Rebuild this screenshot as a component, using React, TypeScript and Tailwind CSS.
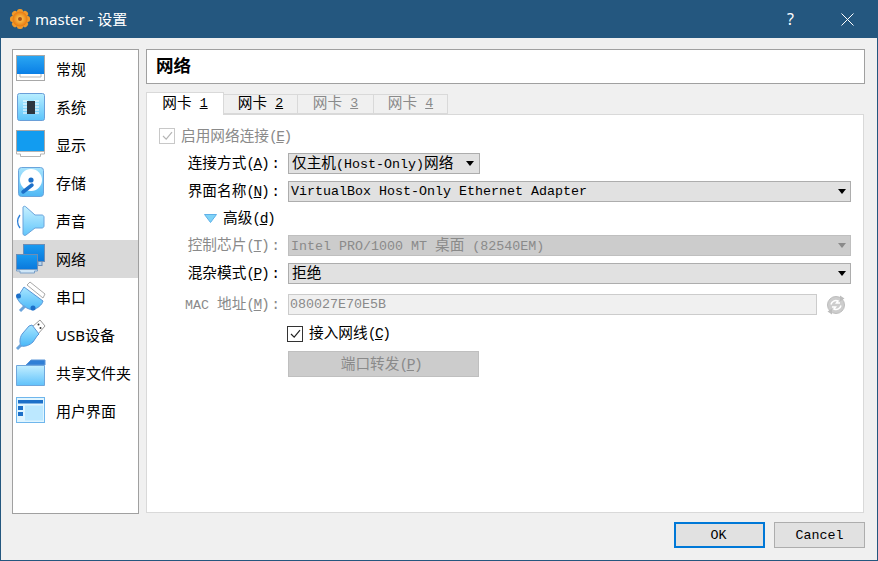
import React from "react";

const F = { fontFamily: '"Liberation Mono","Noto Sans CJK SC",monospace' };
const S = { fontFamily: '"Noto Sans","Noto Sans CJK SC",sans-serif' };
const grad = (id: string, a: string, b: string) => (
  <linearGradient id={id} x1="0" y1="0" x2="0" y2="1">
    <stop offset="0" stopColor={a} />
    <stop offset="1" stopColor={b} />
  </linearGradient>
);

const Monitor = () => (
  <svg width="32" height="32" viewBox="0 0 32 32">
    <defs>{grad("m", "#2aa6f2", "#0a7fe6")}</defs>
    <rect x="2.5" y="2.5" width="28" height="25" fill="#fff" stroke="#a8a8a8" />
    <rect x="3" y="3" width="27" height="18" fill="url(#m)" />
    <path d="M6 21v3h21v-3" fill="none" stroke="#b5b5b5" />
  </svg>
);
const Display = () => (
  <svg width="32" height="32" viewBox="0 0 32 32">
    <rect x="2.5" y="1.5" width="28" height="21" fill="#129cf0" stroke="#a8a8a8" />
    <path d="M2.5 22.5h28v2.5h-4v2.5h-20V25h-4z" fill="#fff" stroke="#b5b5b5" />
  </svg>
);
const Chip = () => (
  <svg width="32" height="32" viewBox="0 0 32 32">
    <defs>{grad("c", "#b8eeff", "#5cc4fb")}</defs>
    <rect x="3.5" y="2.5" width="27" height="27" rx="2" fill="url(#c)" stroke="#6a9fd8" />
    <path d="M9 10h5M9 13h5M9 16h5M9 19h5M9 22h5M20 10h5M20 13h5M20 16h5M20 19h5M20 22h5" stroke="#fff" />
    <rect x="13" y="10" width="8" height="13" fill="#2d3640" />
  </svg>
);
const Disk = () => (
  <svg width="32" height="32" viewBox="0 0 32 32">
    <defs>{grad("d", "#a8e4fd", "#4fb8f5")}</defs>
    <rect x="4.5" y="0.5" width="25" height="29" rx="3" fill="url(#d)" stroke="#6aa4dc" />
    <circle cx="17" cy="13" r="11" fill="#fff" />
    <circle cx="17" cy="13" r="2.6" fill="#1d70c9" />
    <path d="M9 25l9-7" stroke="#1d70c9" strokeWidth="3.5" strokeLinecap="round" />
  </svg>
);
const Speaker = () => (
  <svg width="32" height="32" viewBox="0 0 32 32">
    <defs>{grad("s", "#c8f1ff", "#62c6fb")}</defs>
    <path d="M9 2c1-1 2-1 3 0l9 8h7c1 0 2 1 2 2v9c0 1-1 2-2 2h-7l-9 7c-1 1-3 0-3-1z" fill="url(#s)" stroke="#6aa4dc" />
    <path d="M6 10c-3 4-3 9 0 13" fill="none" stroke="#2c7fd8" strokeWidth="1.4" />
  </svg>
);
const Net = () => (
  <svg width="32" height="32" viewBox="0 0 32 32">
    <defs>{grad("n", "#1a9bf0", "#0a78dc")}</defs>
    <rect x="9.5" y="1.5" width="21" height="17" fill="url(#n)" stroke="#6d8db5" />
    <rect x="24" y="18.5" width="4" height="4" fill="#b5d4ee" stroke="#6d8db5" />
    <rect x="2.5" y="11.5" width="21" height="15" fill="url(#n)" stroke="#6d8db5" />
    <path d="M2.5 26.5h21v1.5h-3v2H6v-2H2.5z" fill="#cfe6f7" stroke="#7aa0c8" />
  </svg>
);
const Serial = () => (
  <svg width="32" height="32" viewBox="0 0 32 32">
    <defs>{grad("p", "#a8e6ff", "#4ab8f8")}</defs>
    <path d="M16 1l15 12-2 4L13 4z" fill="#fff" stroke="#a9a9a9" />
    <path d="M10 6l19 14c-1 4-5 7-10 9-7-1-13-6-16-12z" fill="url(#p)" stroke="#5a96d8" />
    <path d="M11 25l-5 5" stroke="#6aa4dc" strokeWidth="3" />
    <circle cx="4.5" cy="15" r="2.5" fill="#1d70c9" />
    <circle cx="19" cy="27" r="2.5" fill="#1d70c9" />
  </svg>
);
const Usb = () => (
  <svg width="32" height="32" viewBox="0 0 32 32">
    <defs>{grad("u", "#a8e6ff", "#4ab8f8")}</defs>
    <path d="M18 8l8-7 5 6-7 8z" fill="#fff" stroke="#9a9a9a" />
    <circle cx="24.5" cy="5.5" r="1" fill="#333" />
    <circle cx="26.5" cy="9" r="1" fill="#333" />
    <path d="M15 7l3-1 7 9-2 2-4 6c-3 3-8 5-12 4-2-4-1-10 2-13z" fill="url(#u)" stroke="#5a96d8" />
    <path d="M7 26l-4 4" stroke="#6aa4dc" strokeWidth="3" />
  </svg>
);
const Folder = () => (
  <svg width="32" height="32" viewBox="0 0 32 32">
    <defs>{grad("f", "#c2eeff", "#60c2fb")}</defs>
    <path d="M12 8l5-5h14v5z" fill="#2f7fd6" stroke="#5a96d8" />
    <path d="M2.5 8.5h28v20h-28z" fill="url(#f)" stroke="#6fa7dc" />
  </svg>
);
const Ui = () => (
  <svg width="32" height="32" viewBox="0 0 32 32">
    <rect x="2.5" y="2.5" width="28" height="25" fill="#e0f5ff" stroke="#6fb6ec" />
    <rect x="4" y="5" width="25" height="3.5" fill="#1d70c9" />
    <rect x="4" y="11" width="5" height="4" fill="#1d70c9" />
    <rect x="4" y="17" width="5" height="4" fill="#1d70c9" />
    <rect x="11" y="10.5" width="18" height="15" fill="#bce8ff" />
  </svg>
);

const Gear = () => (
  <svg width="20" height="20" viewBox="0 0 20 20">
    <defs>
      <radialGradient id="g">
        <stop offset="0" stopColor="#ffd35a" />
        <stop offset="1" stopColor="#e8780f" />
      </radialGradient>
    </defs>
    {[0, 45, 90, 135].map((a) => (
      <rect key={a} x="7" y="0" width="6" height="20" rx="2.5" fill="#ef9a2c" transform={`rotate(${a} 10 10)`} />
    ))}
    <circle cx="10" cy="10" r="7.5" fill="url(#g)" />
    <circle cx="10" cy="10" r="2" fill="#a8501a" />
  </svg>
);

const items: [string, React.ReactNode][] = [
  ["常规", <Monitor />],
  ["系统", <Chip />],
  ["显示", <Display />],
  ["存储", <Disk />],
  ["声音", <Speaker />],
  ["网络", <Net />],
  ["串口", <Serial />],
  ["USB设备", <Usb />],
  ["共享文件夹", <Folder />],
  ["用户界面", <Ui />],
];

const Arrow = ({ c = "#000" }: { c?: string }) => (
  <svg width="8" height="5" viewBox="0 0 8 5" className="shrink-0"><path d="M0 0h8L4 5z" fill={c} /></svg>
);

const M = ({ c }: { c: string }) => (
  <span className="tracking-[-1.5px]">(<u>{c}</u>)</span>
);

const Label = ({ text, m, dim }: { text: React.ReactNode; m: string; dim?: boolean }) => (
  <div className={`w-[141px] shrink-0 pr-[8px] text-right text-[14.67px] whitespace-nowrap ${dim ? "text-[#8a8a8a]" : "text-black"}`}>
    {text}<M c={m} /><span className="ml-[3px]">:</span>
  </div>
);

const Tab = ({ n, w, active, dim }: { n: string; w: string; active?: boolean; dim?: boolean }) => (
  <div
    className={`${w} flex items-center justify-center text-[14.67px] border border-[#d9d9d9] ${
      active ? "h-[23px] bg-white border-b-0 relative z-10 -mb-px" : "h-[20px] bg-[#f0f0f0] -ml-px"
    } ${dim ? "text-[#8a8a8a]" : "text-black"}`}
  >
    网卡<span className="text-[13.33px]">&nbsp;<u>{n}</u></span>
  </div>
);

export default function App() {
  return (
    <div className="w-[878px] h-[561px] flex flex-col bg-[#f0f0f0] border border-t-0 border-[#24577f] overflow-hidden" style={F}>
      <div className="h-[38px] shrink-0 -mx-px bg-[#24577f] flex items-center pl-[10px] text-white" style={S}>
        <Gear />
        <span className="ml-[5px] text-[15px]">master - 设置</span>
        <span className="ml-auto mr-[47px] text-[16px]">?</span>
        <svg width="13" height="13" viewBox="0 0 13 13" className="mr-[24px]"><path d="M.5.5l12 12M12.5.5l-12 12" stroke="#fff" strokeWidth="1" /></svg>
      </div>

      <div className="flex-1 min-h-0 flex gap-[7px] pl-[11px] pr-[13px] pt-[11px] pb-[7px]">
        <div className="w-[127px] h-[465px] shrink-0 bg-white border border-[#a0a0a0] flex flex-col">
          {items.map(([t, ic], i) => (
            <div key={t} className={`h-[38px] shrink-0 flex items-center pl-[1px] ${i === 5 ? "bg-[#d9d9d9]" : ""}`}>
              <span className="w-[32px] h-[32px] shrink-0">{ic}</span>
              <span className="ml-[10px] mt-[1px] text-[15px] text-black whitespace-nowrap" style={S}>{t}</span>
            </div>
          ))}
        </div>

        <div className="flex-1 min-w-0 flex flex-col">
          <div className="h-[35px] shrink-0 -mr-px bg-white border border-[#a0a0a0] flex items-center pl-[9px] pt-[1px] text-[17.5px] font-bold text-black">网络</div>

          <div className="mt-[8px] flex items-end h-[22px] shrink-0">
            <Tab n="1" w="w-[78px]" active />
            <Tab n="2" w="w-[75px]" />
            <Tab n="3" w="w-[77px]" dim />
            <Tab n="4" w="w-[75px]" dim />
          </div>

          <div className="h-[399px] shrink-0 bg-white border border-[#d9d9d9] flex flex-col pt-[13px] text-[14.67px]">
            <div className="h-[16px] flex items-center pl-[12px] text-[#8a8a8a]">
              <span className="w-[16px] h-[16px] border border-[#c8c8c8] flex items-center justify-center">
                <svg width="11" height="10" viewBox="0 0 11 10"><path d="M1 5l3.2 3.2L10 1.2" fill="none" stroke="#b5b5b5" strokeWidth="1.2" /></svg>
              </span>
              <span className="ml-[6px] mt-[1px]">启用网络连接<M c="E" /></span>
            </div>

            <div className="mt-[9px] h-[21px] flex items-center">
              <Label text="连接方式" m="A" />
              <div className="w-[192px] h-[21px] bg-[#e1e1e1] border border-[#adadad] flex items-center pl-[3px] pr-[5px] justify-between">
                <span className="whitespace-nowrap">仅主机<span className="text-[13.33px]">(Host-Only)</span>网络</span>
                <Arrow />
              </div>
            </div>

            <div className="mt-[7px] h-[21px] flex items-center">
              <Label text="界面名称" m="N" />
              <div className="w-[563px] h-[21px] bg-[#e1e1e1] border border-[#adadad] flex items-center pl-[2px] pr-[4px] justify-between text-[13.33px] text-black">
                <span className="whitespace-nowrap mt-[1px]">VirtualBox Host-Only Ethernet Adapter</span>
                <Arrow />
              </div>
            </div>

            <div className="mt-[7px] h-[19px] flex items-center pl-[57px] text-black">
              <svg width="13" height="9" viewBox="0 0 13 9"><path d="M.5.5h12L6.5 8.5z" fill="#7fd3f7" stroke="#5fb0e8" /></svg>
              <span className="ml-[6px]">高级<M c="d" /></span>
            </div>

            <div className="mt-[7px] h-[21px] flex items-center">
              <Label text="控制芯片" m="T" dim />
              <div className="w-[563px] h-[21px] bg-[#cccccc] border border-[#bfbfbf] flex items-center pl-[2px] pr-[4px] justify-between text-[13.33px] text-[#8a8a8a]">
                <span className="whitespace-nowrap">Intel PRO/1000 MT <span className="text-[14.67px]">桌面</span> (82540EM)</span>
                <Arrow c="#8a8a8a" />
              </div>
            </div>

            <div className="mt-[7px] h-[21px] flex items-center">
              <Label text="混杂模式" m="P" />
              <div className="w-[563px] h-[21px] bg-[#e1e1e1] border border-[#adadad] flex items-center pl-[3px] pr-[4px] justify-between">
                <span>拒绝</span>
                <Arrow />
              </div>
            </div>

            <div className="mt-[10px] h-[21px] flex items-center">
              <Label text={<><span className="text-[13.33px]">MAC </span>地址</>} m="M" dim />
              <div className="w-[529px] h-[21px] bg-[#f0f0f0] border border-[#cccccc] flex items-center pl-[1px] text-[13.33px] text-[#8a8a8a]">080027E70E5B</div>
              <svg width="20" height="20" viewBox="0 0 20 20" className="ml-[9px]">
                <circle cx="10" cy="10" r="8.5" fill="#cdcdcd" stroke="#bdbdbd" />
                <path d="M14 .5l4.5 3-4.5 3zM6 19.5l-4.500-3 4.500-3z" fill="#bdbdbd" />
                <path d="M5 9.500a5 5 0 0 1 7-3.500l-1.500 2h3.500M15 10.500a5 5 0 0 1-7 3.500l1.500-2H6" fill="none" stroke="#fff" strokeWidth="1.5" />
              </svg>
            </div>

            <div className="mt-[11px] h-[16px] flex items-center pl-[140px] text-black">
              <span className="w-[16px] h-[16px] bg-white border border-[#333] flex items-center justify-center">
                <svg width="11" height="10" viewBox="0 0 11 10"><path d="M1 5l3.2 3.2L10 1.2" fill="none" stroke="#222" strokeWidth="1.2" /></svg>
              </span>
              <span className="ml-[6px]">接入网线<M c="C" /></span>
            </div>

            <div className="mt-[9px] pl-[141px]">
              <div className="w-[191px] h-[26px] pt-[1px] pr-[5px] bg-[#cccccc] border border-[#bfbfbf] flex items-center justify-center text-[#8a8a8a]">端口转发<M c="P" /></div>
            </div>
          </div>

          <div className="mt-[9px] flex justify-end gap-[9px] -mr-px">
            <div className="w-[91px] h-[26px] pt-[2px] pr-[2px] bg-[#e1e1e1] border-2 border-[#0078d7] flex items-center justify-center text-[13.33px] text-black">OK</div>
            <div className="w-[91px] h-[26px] pt-[2px] bg-[#e1e1e1] border border-[#adadad] flex items-center justify-center text-[13.33px] text-black">Cancel</div>
          </div>
        </div>
      </div>
    </div>
  );
}
